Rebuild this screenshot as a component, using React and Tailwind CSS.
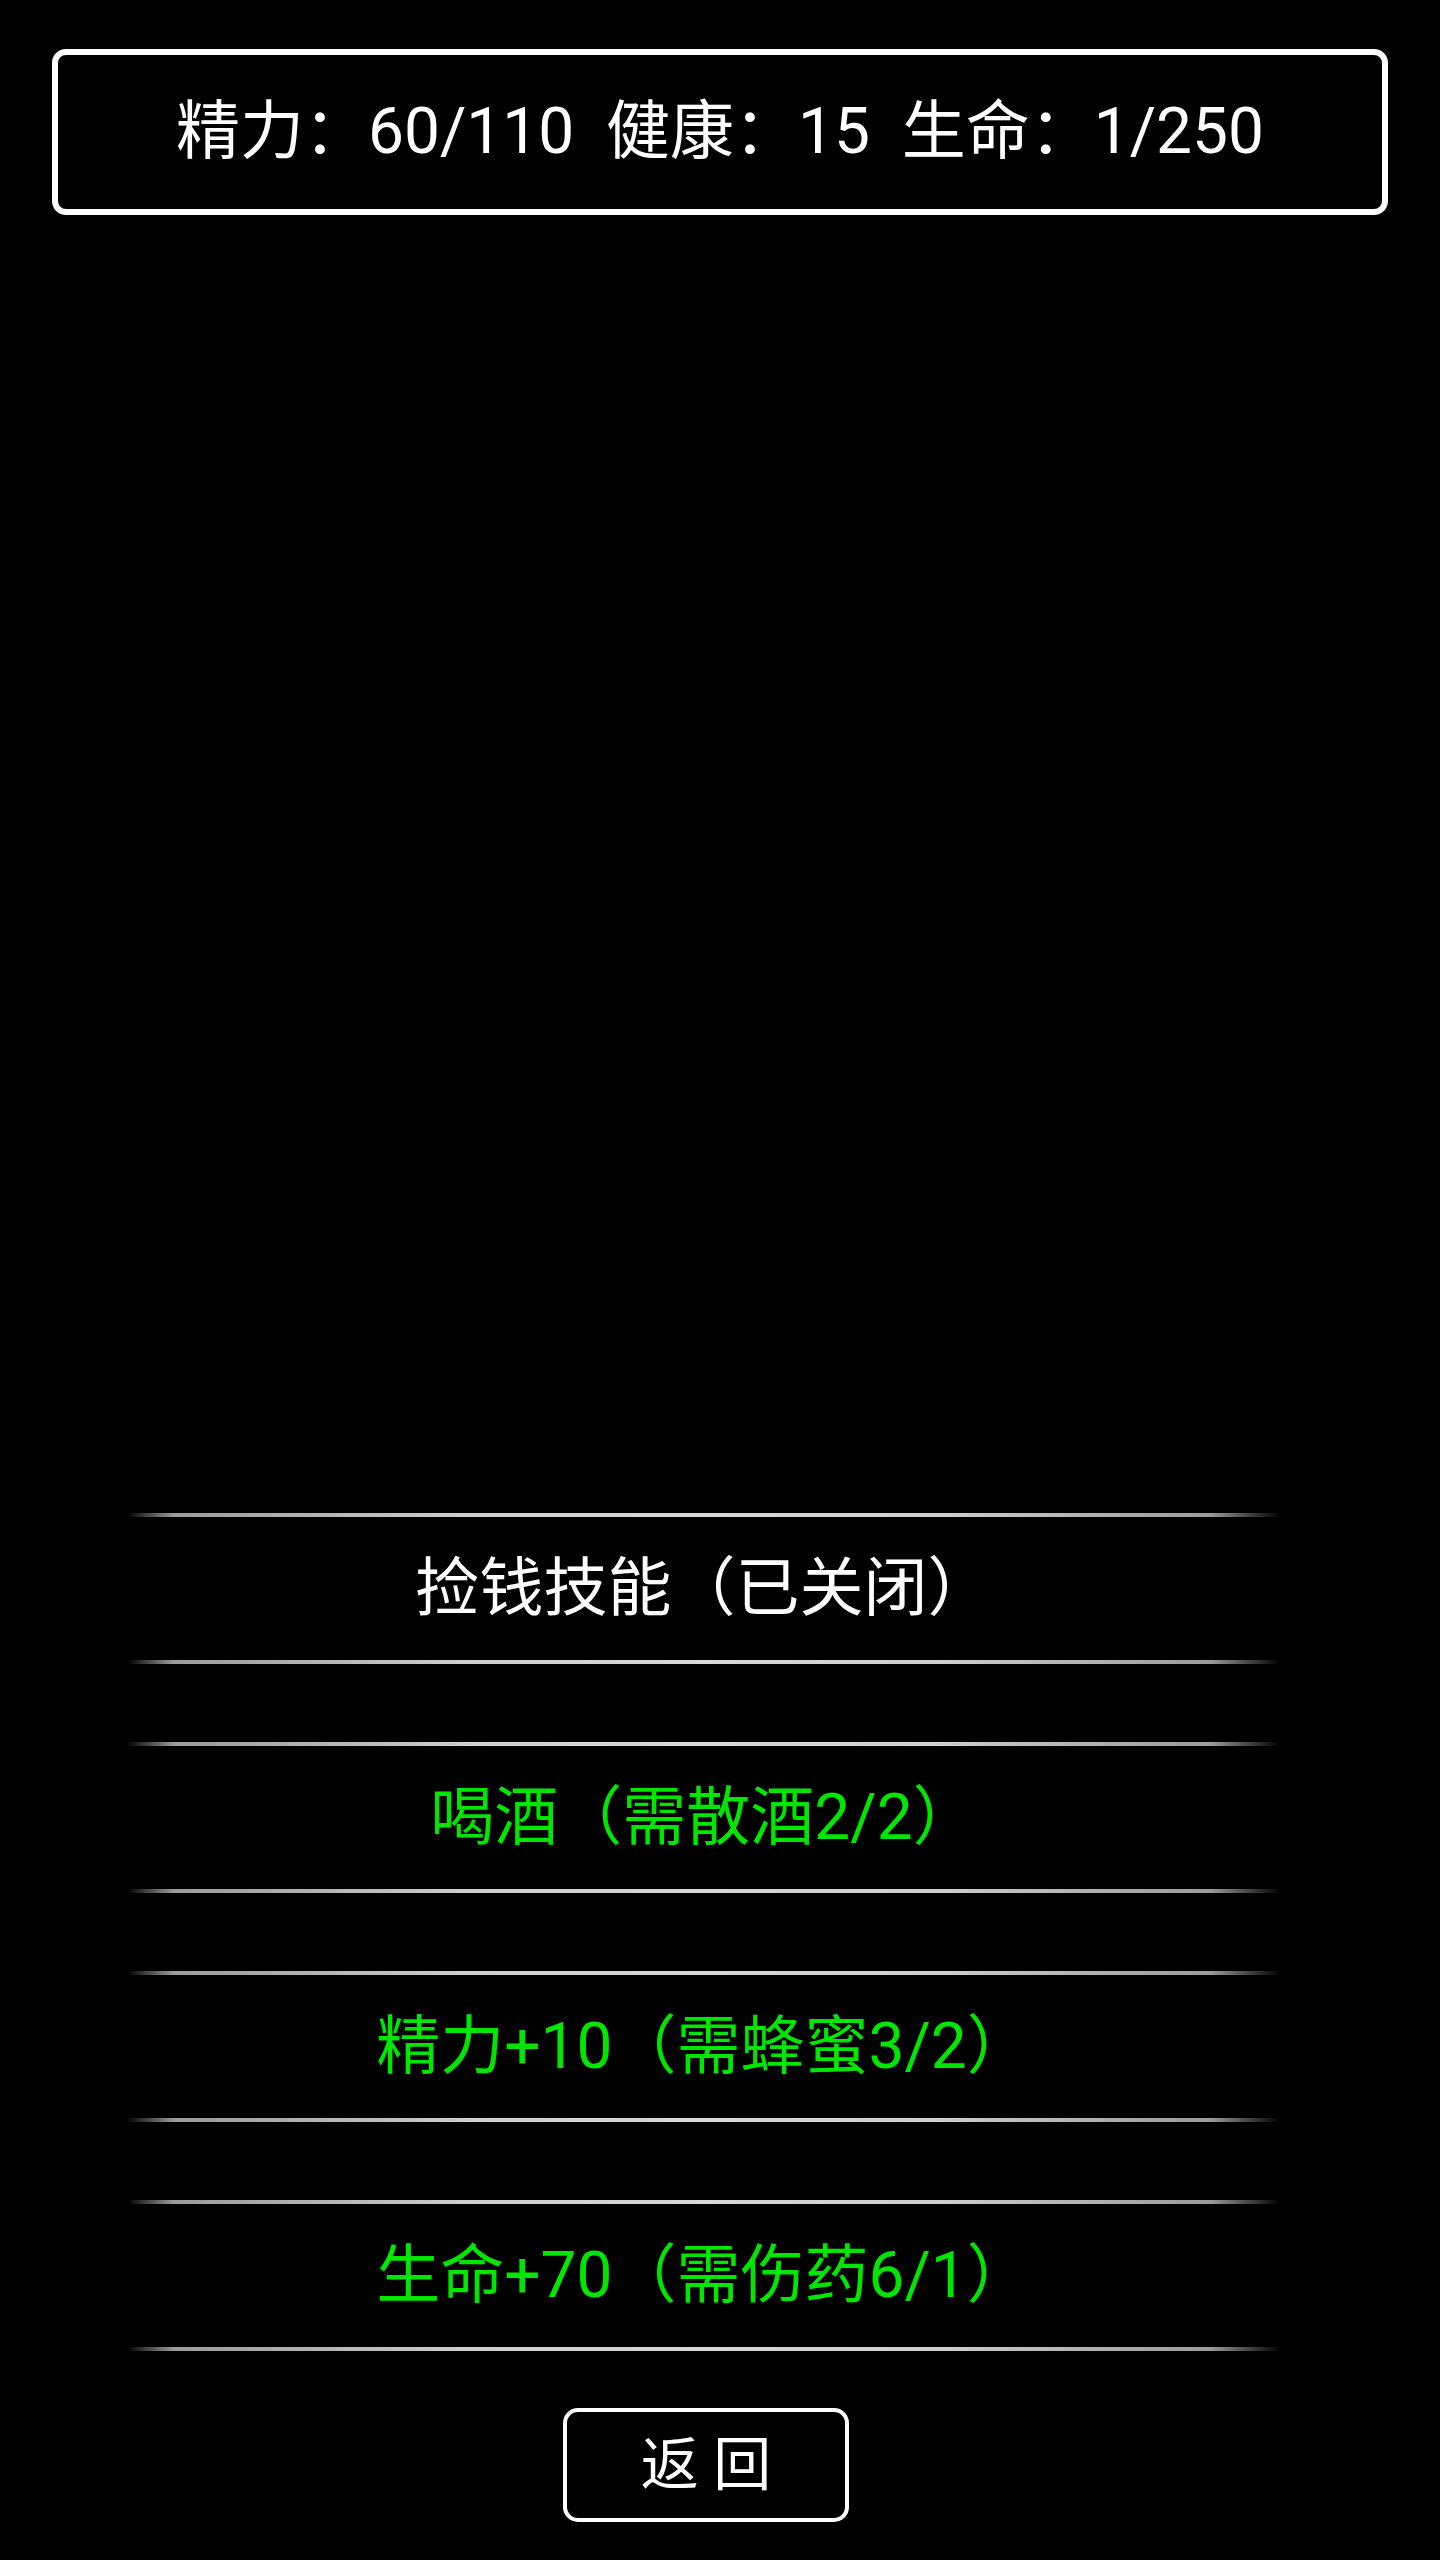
const items = [
  { label: "捡钱技能（已关闭）", color: "text-white" },
  { label: "喝酒（需散酒2/2）", color: "text-[#00e600]" },
  { label: "精力+10（需蜂蜜3/2）", color: "text-[#00e600]" },
  { label: "生命+70（需伤药6/1）", color: "text-[#00e600]" },
];

const GlowLine = () => (
  <div className="h-[4px] w-full bg-[linear-gradient(to_right,transparent_0%,#9a9a9a_4%,#cfcfcf_30%,#d8d8d8_50%,#cfcfcf_70%,#9a9a9a_94%,transparent_100%)]" />
);

const App = () => {
  return (
    <div
      className="w-[1440px] h-[2560px] bg-black flex flex-col overflow-hidden"
      style={{ fontFamily: 'Roboto, "Noto Sans CJK SC", sans-serif' }}
    >
      <div className="mt-[49px] mx-[52px] h-[166px] border-[6px] border-white rounded-[14px] flex items-center justify-center">
        <p className="text-white text-[64px] leading-none whitespace-pre">
          精力：60/110  健康：15  生命：1/250
        </p>
      </div>

      <ul className="mt-[1298px] ml-[127px] w-[1153px] flex flex-col gap-[78px]">
        {items.map((item) => (
          <li key={item.label} className="flex flex-col">
            <GlowLine />
            <div className="h-[143px] flex items-center justify-center">
              <span className={`text-[64px] leading-none ${item.color}`}>
                {item.label}
              </span>
            </div>
            <GlowLine />
          </li>
        ))}
      </ul>

      <div className="mt-[57px] ml-[563px] w-[286px] h-[114px] border-[4px] border-white rounded-[15px] flex items-center justify-center">
        <span className="text-white text-[58px] leading-none whitespace-pre">返 回</span>
      </div>
    </div>
  );
};

export default App;
